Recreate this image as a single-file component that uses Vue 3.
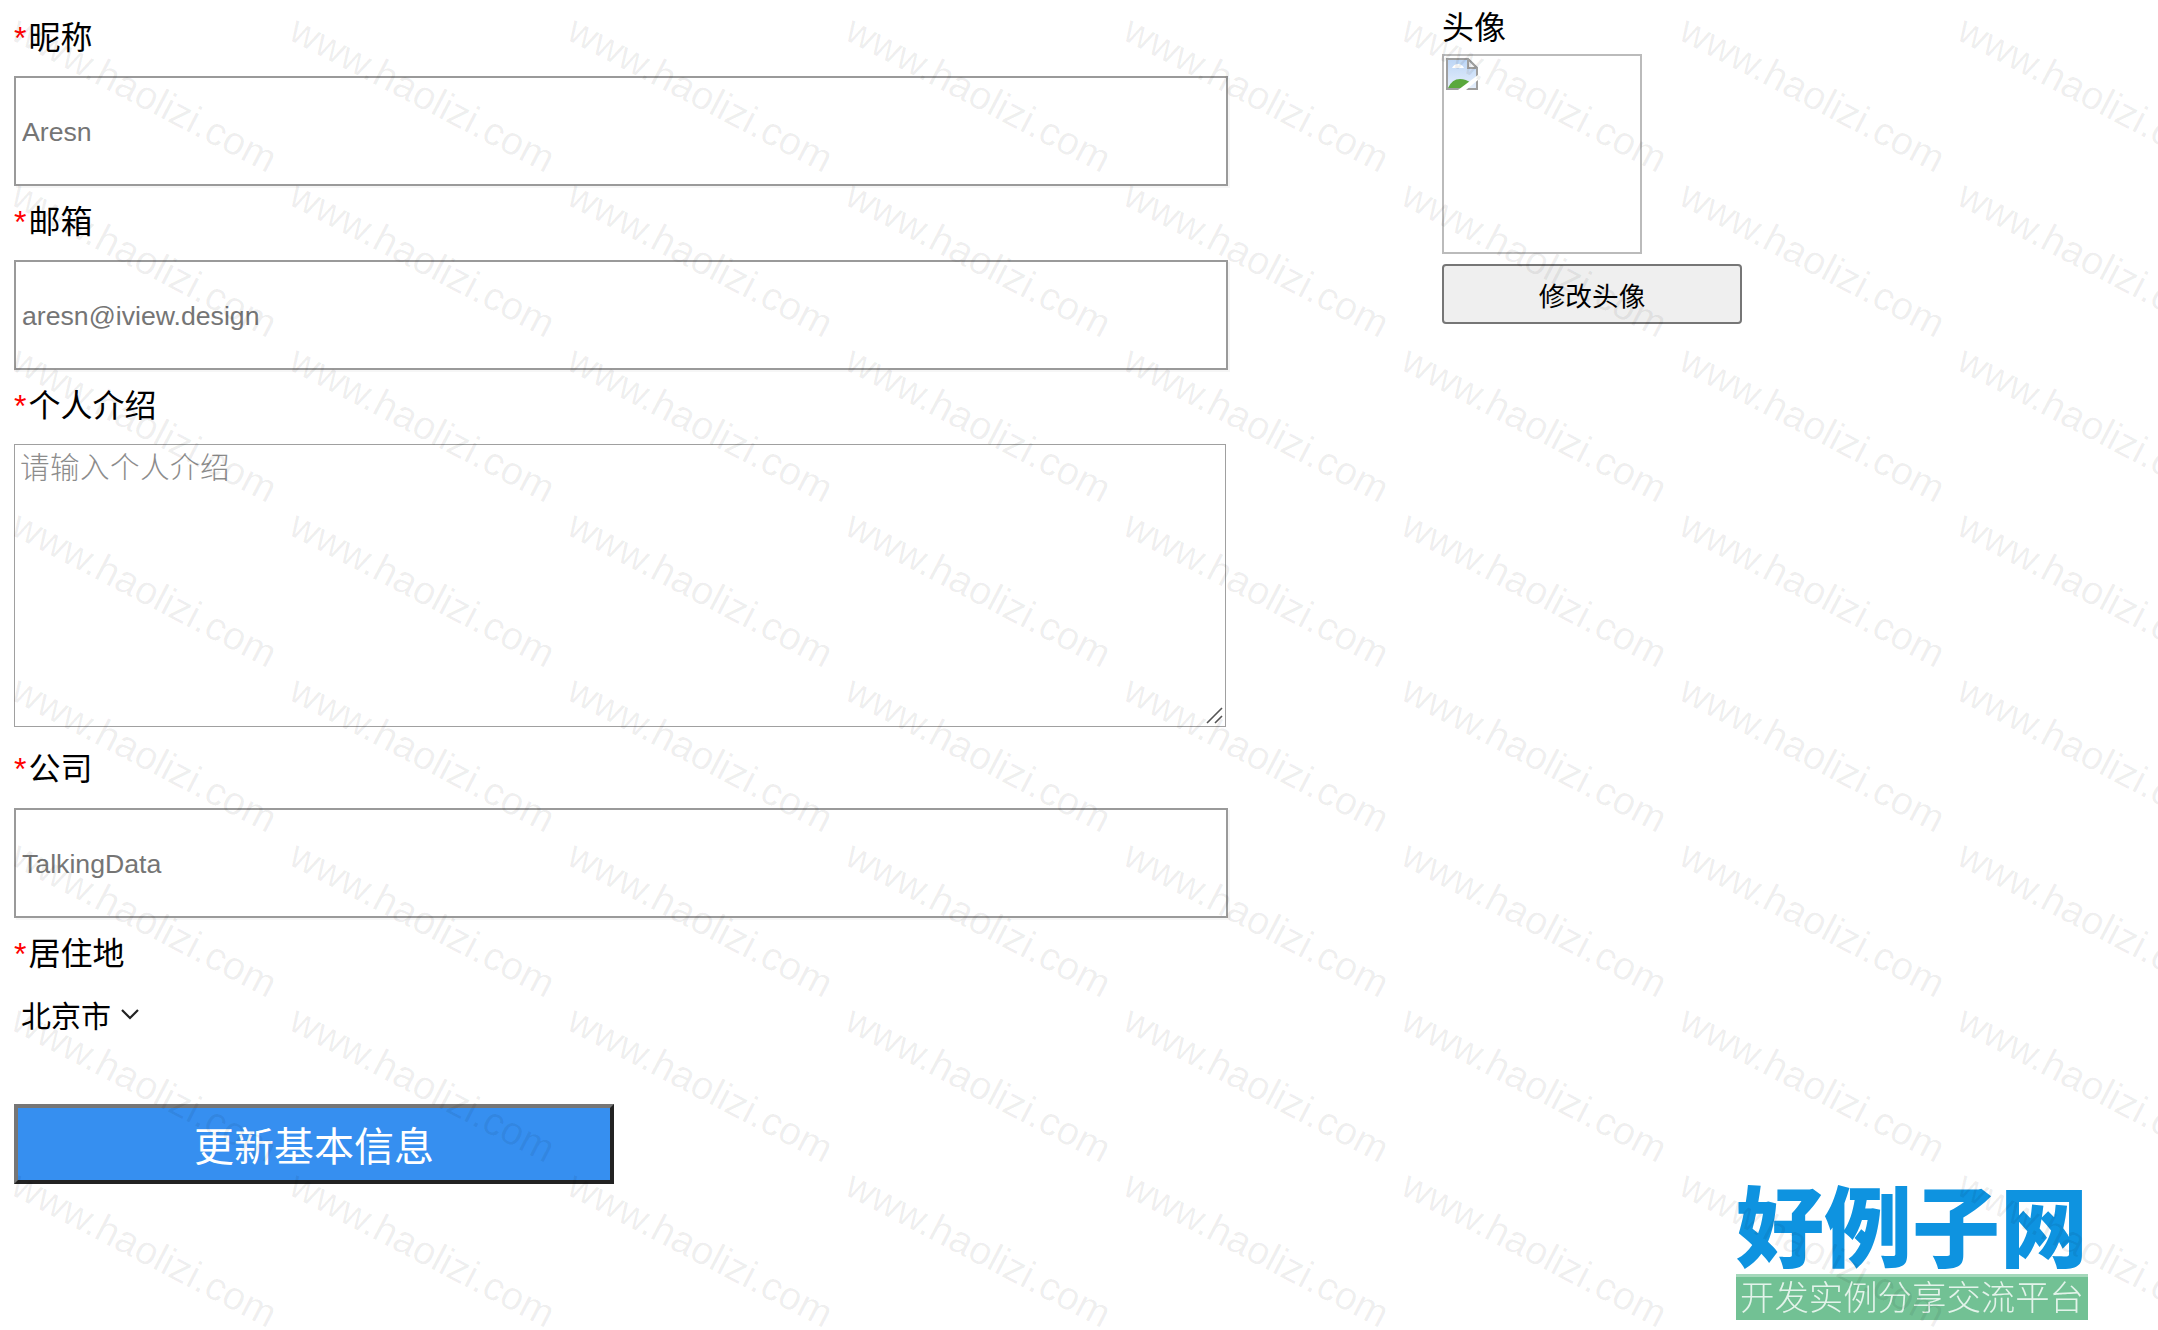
<template>
  <div class="page">
    <div class="watermark">
      <span v-for="n in 72" :key="n" class="mark">www.haolizi.com</span>
    </div>

    <form class="form" @submit.prevent>
      <div class="main">
        <div class="row">
          <div class="label first"><i>*</i>昵称</div>
          <input class="text" type="text" value="Aresn" />
        </div>
        <div class="row">
          <div class="label up"><i>*</i>邮箱</div>
          <input class="text" type="text" value="aresn@iview.design" />
        </div>
        <div class="row">
          <div class="label up"><i>*</i>个人介绍</div>
          <div class="intro-wrap">
            <textarea class="intro" placeholder="请输入个人介绍"></textarea>
            <svg class="grip" width="18" height="18" viewBox="0 0 18 18">
              <path d="M1 16 L16 1 M9 16 L16 9" fill="none" stroke="#555" stroke-width="1.6" />
            </svg>
          </div>
        </div>
        <div class="row">
          <div class="label company"><i>*</i>公司</div>
          <input class="text" type="text" value="TalkingData" />
        </div>
        <div class="row">
          <div class="label up"><i>*</i>居住地</div>
          <div class="city">
            北京市
            <svg width="18" height="12" viewBox="0 0 18 12">
              <path d="M1 2 L9 10 L17 2" fill="none" stroke="#222" stroke-width="2.2" />
            </svg>
          </div>
        </div>
        <button class="save" type="button">更新基本信息</button>
      </div>

      <div class="side">
        <div class="avatar-title">头像</div>
        <div class="avatar">
          <svg width="32" height="32" viewBox="0 0 32 32">
            <defs>
              <linearGradient id="sky" x1="0" y1="0" x2="0" y2="1">
                <stop offset="0" stop-color="#bcd5f5" />
                <stop offset="1" stop-color="#e6effc" />
              </linearGradient>
            </defs>
            <path d="M1 1 H22 L31 10 V31 H1 Z" fill="url(#sky)" stroke="#9f9f9f" stroke-width="2" />
            <path d="M22 1 V10 H31 Z" fill="#f4f4f4" stroke="#9f9f9f" stroke-width="2" />
            <path d="M6 10 Q8 6 12 6 Q16 6 18 10 Z" fill="#fff" />
            <path d="M2 30 Q6 21 14 21 Q20 21 25 25 L19 30 Z" fill="#5aa83c" />
            <path d="M12 32 L32 17 V22 L20 32 Z" fill="#fff" />
          </svg>
        </div>
        <button class="change" type="button">修改头像</button>
      </div>
    </form>

    <div class="logo">
      <div class="logo-name">好例子网</div>
      <div class="logo-sub">开发实例分享交流平台</div>
    </div>
  </div>
</template>

<script setup>
</script>

<style>
html,
body {
  margin: 0;
  background: #fff;
}
</style>

<style scoped>
.page {
  position: relative;
  width: 2158px;
  height: 1330px;
  overflow: hidden;
  font-family: "Liberation Sans", "Noto Sans CJK SC", sans-serif;
  color: #000;
}

.form {
  display: flex;
  padding-left: 14px;
}

.main {
  width: 1214px;
}

.side {
  margin-left: 214px;
}

.label {
  height: 74px;
  line-height: 74px;
  font-size: 32px;
}

.label i {
  margin-right: 2px;
  color: #f00;
  font-style: normal;
}

.first {
  height: 76px;
  line-height: 76px;
}

.up {
  line-height: 72px;
}

.company {
  height: 81px;
  line-height: 84px;
}

.text {
  display: block;
  box-sizing: border-box;
  width: 1214px;
  height: 110px;
  padding: 3px 6px 0;
  border: 2px solid #9a9a9a;
  outline: none;
  font: 26.67px "Liberation Sans", sans-serif;
  color: #757575;
  background: transparent;
  box-shadow: 2px 2px 0 #f6f6f6;
}

.intro-wrap {
  position: relative;
  width: 1212px;
}

.intro {
  display: block;
  box-sizing: border-box;
  width: 1212px;
  height: 283px;
  margin: 0;
  padding: 0 5px;
  border: 1px solid #a0a0a0;
  outline: none;
  resize: none;
  font: 300 29.6px/41px "Noto Sans CJK SC", monospace;
  letter-spacing: 0.4px;
  background: transparent;
}

.intro::placeholder {
  color: #8c8c8c;
}

.grip {
  position: absolute;
  right: 2px;
  bottom: 2px;
}

.city {
  display: flex;
  align-items: center;
  gap: 10px;
  height: 44px;
  padding-left: 7px;
  font-size: 30px;
}

.save {
  display: block;
  box-sizing: border-box;
  width: 600px;
  height: 80px;
  margin-top: 68px;
  padding: 0;
  border-style: solid;
  border-width: 4px;
  border-color: #767676 #222 #222 #767676;
  background: #368ff0;
  color: #fff;
  font-size: 40px;
  font-family: inherit;
}

.avatar-title {
  height: 54px;
  line-height: 56px;
  font-size: 32px;
}

.avatar {
  box-sizing: border-box;
  width: 200px;
  height: 200px;
  padding: 2px;
  border: 2px solid #bbb;
}

.avatar svg {
  display: block;
}

.change {
  display: block;
  box-sizing: border-box;
  width: 300px;
  height: 60px;
  margin-top: 10px;
  border: 2px solid #767676;
  border-radius: 4px;
  background: #efefef;
  font-size: 26.67px;
  font-family: inherit;
}

.watermark {
  position: absolute;
  inset: 0;
  z-index: 2;
  display: grid;
  grid-template-columns: repeat(8, 278px);
  grid-auto-rows: 165px;
  pointer-events: none;
}

.mark {
  display: block;
  width: 290px;
  margin: 0 0 0 -14px;
  font-size: 39.5px;
  line-height: 1;
  white-space: nowrap;
  color: rgba(0, 0, 0, 0.065);
  transform-origin: 0 50%;
  transform: rotate(27.5deg);
}

.logo {
  position: absolute;
  left: 1736px;
  top: 1176px;
  width: 352px;
  filter: blur(0.5px);
}

.logo-name {
  height: 98px;
  font-family: "Noto Sans CJK SC", sans-serif;
  font-size: 88px;
  font-weight: 900;
  line-height: 92px;
  white-space: nowrap;
  color: #0e93e0;
}

.logo-sub {
  height: 46px;
  border-top: 3px solid #a5d8bb;
  box-sizing: border-box;
  background: #72c194;
  color: rgba(255, 255, 255, 0.8);
  font-family: "Noto Sans CJK SC", sans-serif;
  font-size: 34.4px;
  font-weight: 300;
  line-height: 36px;
  text-align: center;
  white-space: nowrap;
}
</style>
